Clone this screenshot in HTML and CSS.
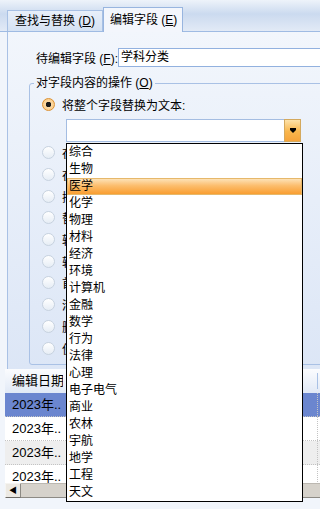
FILE: index.html
```html
<!DOCTYPE html>
<html lang="zh-CN">
<head>
    <meta charset="UTF-8">
    <meta name="viewport" content="width=device-width, initial-scale=1.0">
    <link rel="stylesheet" href="styles.css">
    <title>编辑字段</title>
</head>
<body>
    <div class="tabs">
        <div class="tab">查找与替换 (<u>D</u>)</div>
        <div class="tab current">编辑字段 (<u>E</u>)</div>
    </div>

    <div class="page">
        <div class="field-row">
            <label class="field-label">待编辑字段 (<u>F</u>):</label>
            <div class="field-input">学科分类</div>
        </div>

        <fieldset class="group">
            <legend>对字段内容的操作 (<u>O</u>)</legend>
            <div class="option checked"><span class="radio"></span>将整个字段替换为文本:</div>
            <div class="combo">
                <div class="combo-text"></div>
                <div class="combo-btn"><span class="arrow"></span></div>
                <ul class="droplist">
                    <li>综合</li>
                    <li>生物</li>
                    <li class="hot">医学</li>
                    <li>化学</li>
                    <li>物理</li>
                    <li>材料</li>
                    <li>经济</li>
                    <li>环境</li>
                    <li>计算机</li>
                    <li>金融</li>
                    <li>数学</li>
                    <li>行为</li>
                    <li>法律</li>
                    <li>心理</li>
                    <li>电子电气</li>
                    <li>商业</li>
                    <li>农林</li>
                    <li>宇航</li>
                    <li>地学</li>
                    <li>工程</li>
                    <li>天文</li>
                </ul>
            </div>
            <div class="option"><span class="radio"></span>在字段开头插入文本:</div>
            <div class="option"><span class="radio"></span>在字段末尾添加文本:</div>
            <div class="option"><span class="radio"></span>插入到指定位置:</div>
            <div class="option"><span class="radio"></span>替换指定的文本:</div>
            <div class="option"><span class="radio"></span>转换为大写</div>
            <div class="option"><span class="radio"></span>转换为小写</div>
            <div class="option"><span class="radio"></span>首字母大写</div>
            <div class="option"><span class="radio"></span>清除字段内容</div>
            <div class="option"><span class="radio"></span>删除多余空格</div>
            <div class="option"><span class="radio"></span>使用正则表达式</div>
        </fieldset>
    </div>

    <div class="grid">
        <div class="grid-head">
            <div class="cell c1">编辑日期</div>
            <div class="cell c2"></div>
            <div class="cell c3"></div>
        </div>
        <div class="grid-row selected">
            <div class="cell c1">2023年..</div>
            <div class="cell c2"></div>
            <div class="cell c3"></div>
        </div>
        <div class="grid-row">
            <div class="cell c1">2023年..</div>
            <div class="cell c2"></div>
            <div class="cell c3"></div>
        </div>
        <div class="grid-row alt">
            <div class="cell c1">2023年..</div>
            <div class="cell c2"></div>
            <div class="cell c3"></div>
        </div>
        <div class="grid-row">
            <div class="cell c1">2023年..</div>
            <div class="cell c2"></div>
            <div class="cell c3"></div>
        </div>
    </div>
    <div class="hscroll">
        <div class="sb-btn">&#9664;</div>
        <div class="sb-track"></div>
    </div>
</body>
</html>
```

FILE: styles.css
```css
body {
    margin: 0;
    width: 320px;
    height: 509px;
    overflow: hidden;
    background-color: #f1f5fb;
    font-family: "Liberation Sans", "Noto Sans CJK SC", sans-serif;
    font-size: 12px;
    color: #000;
}
u {
    text-decoration: underline;
    text-underline-offset: 1px;
}

/* tab strip */
.tabs {
    display: flex;
    align-items: flex-end;
    height: 31px;
    padding-left: 7px;
    background: linear-gradient(#eef3fa, #cbdaef 45%, #e2eaf6);
    border-bottom: 1px solid #9fbbe3;
}
.tab {
    box-sizing: border-box;
    width: 96px;
    height: 21px;
    padding-left: 7px;
    line-height: 20px;
    border: 1px solid #a7c0e4;
    border-bottom: none;
    background: linear-gradient(#e8eff9, #d5e2f3);
    white-space: nowrap;
}
.tab.current {
    width: 80px;
    height: 25px;
    margin-bottom: -1px;
    padding-left: 6px;
    line-height: 24px;
    border-color: #98b5df;
    background: #f3f6fc;
}

/* tab page */
.page {
    height: 321px;
    margin-left: 7px;
    padding-top: 16px;
    border-left: 1px solid #a9c1e5;
    background: linear-gradient(#f2f6fc, #dce6f6);
}
.field-row {
    display: flex;
    align-items: center;
    height: 19px;
}
.field-label {
    box-sizing: border-box;
    width: 110px;
    padding-left: 28px;
    white-space: nowrap;
}
.field-input {
    flex: 1;
    height: 17px;
    line-height: 17px;
    padding-left: 2px;
    margin-right: -6px;
    border: 1px solid #92b1df;
    background-color: #fff;
}

.group {
    margin: 9px -10px 0 21px;
    padding: 5px 0 5px 0;
    min-width: 0;
    border: 1px solid #a9c1e5;
    border-radius: 3px;
}
.group legend {
    margin-left: 4px;
    padding: 0 2px;
    line-height: 14px;
}
.option {
    display: flex;
    align-items: center;
    height: 21.7px;
    white-space: nowrap;
    overflow: hidden;
}
.option.checked {
    height: 18px;
}
.radio {
    box-sizing: border-box;
    width: 13px;
    height: 13px;
    margin: 0 7px 0 12px;
    border: 1px solid #c7d2df;
    border-radius: 50%;
    background: linear-gradient(#ffffff, #e6edf5);
}
.option.checked .radio {
    position: relative;
    border-color: #dd9233;
    background: radial-gradient(circle, #1a1a1a 0 2.5px, #fcd9a2 3px, #f7c27a);
}

/* combo box with open list */
.combo {
    position: relative;
    z-index: 10;
    display: flex;
    box-sizing: border-box;
    width: 235px;
    height: 23px;
    margin: 6px 0 0 36px;
    border: 1px solid #a4bde2;
    background-color: #fff;
}
.combo-text {
    flex: 1;
}
.combo-btn {
    display: flex;
    justify-content: center;
    align-items: center;
    width: 15px;
    margin: -1px -1px -1px 0;
    border: 1px solid #d4a95e;
    background: linear-gradient(#fde2a9, #f9b64c 55%, #f7a43a);
}
.arrow {
    width: 0;
    height: 0;
    border-left: 3px solid transparent;
    border-right: 3px solid transparent;
    border-top: 3px solid #000;
    box-shadow: 0 -2px 0 0 #000;
    margin-top: 2px;
}
.droplist {
    position: absolute;
    left: -1px;
    top: 23px;
    box-sizing: border-box;
    width: 237px;
    height: 359px;
    margin: 0;
    padding: 0;
    list-style: none;
    border: 1px solid #000;
    background-color: #fff;
}
.droplist li {
    height: 17px;
    line-height: 17px;
    padding-left: 2px;
}
.droplist li.hot {
    box-sizing: border-box;
    border: 1px solid #e6b86b;
    padding-left: 1px;
    line-height: 15px;
    background: linear-gradient(#fde2b6, #fcbd6c 45%, #f99e31);
}

/* grid below */
.grid {
    height: 114px;
    margin-left: 5px;
    overflow: hidden;
    background-color: #fff;
    font-size: 13px;
}
.grid-head {
    display: flex;
    height: 24px;
    background: linear-gradient(#fbfcfe, #e1e9f6);
}
.grid-head .cell {
    line-height: 24px;
}
.grid-head .c2 {
    border-right: 1px solid #a9c1e5;
    height: 16px;
    margin-top: 4px;
}
.grid-row {
    display: flex;
    height: 24px;
    border-bottom: 1px dotted #c3c3c3;
    box-sizing: border-box;
}
.grid-row .cell {
    line-height: 23px;
}
.grid-row .c2 {
    border-right: 1px dotted #c3c3c3;
}
.grid-row.selected {
    background-color: #6b86cf;
}
.grid-row.alt {
    background-color: #eeeeee;
}
.cell {
    box-sizing: border-box;
    white-space: nowrap;
    overflow: hidden;
}
.c1 {
    width: 58px;
    padding-left: 7px;
}
.c2 {
    width: 255px;
}
.c3 {
    flex: 1;
}

.hscroll {
    display: flex;
    height: 15px;
    margin-left: 5px;
}
.sb-btn {
    box-sizing: border-box;
    width: 16px;
    font-size: 8px;
    line-height: 13px;
    text-align: center;
    border: 1px solid;
    border-color: #f5f4f1 #8d8a84 #6e6b66 #f5f4f1;
    background-color: #ece9e3;
}
.sb-track {
    flex: 1;
    border-top: 1px solid #bcb8b1;
    border-bottom: 1px solid #8d8a84;
    background-color: #d6d2cb;
}
```
